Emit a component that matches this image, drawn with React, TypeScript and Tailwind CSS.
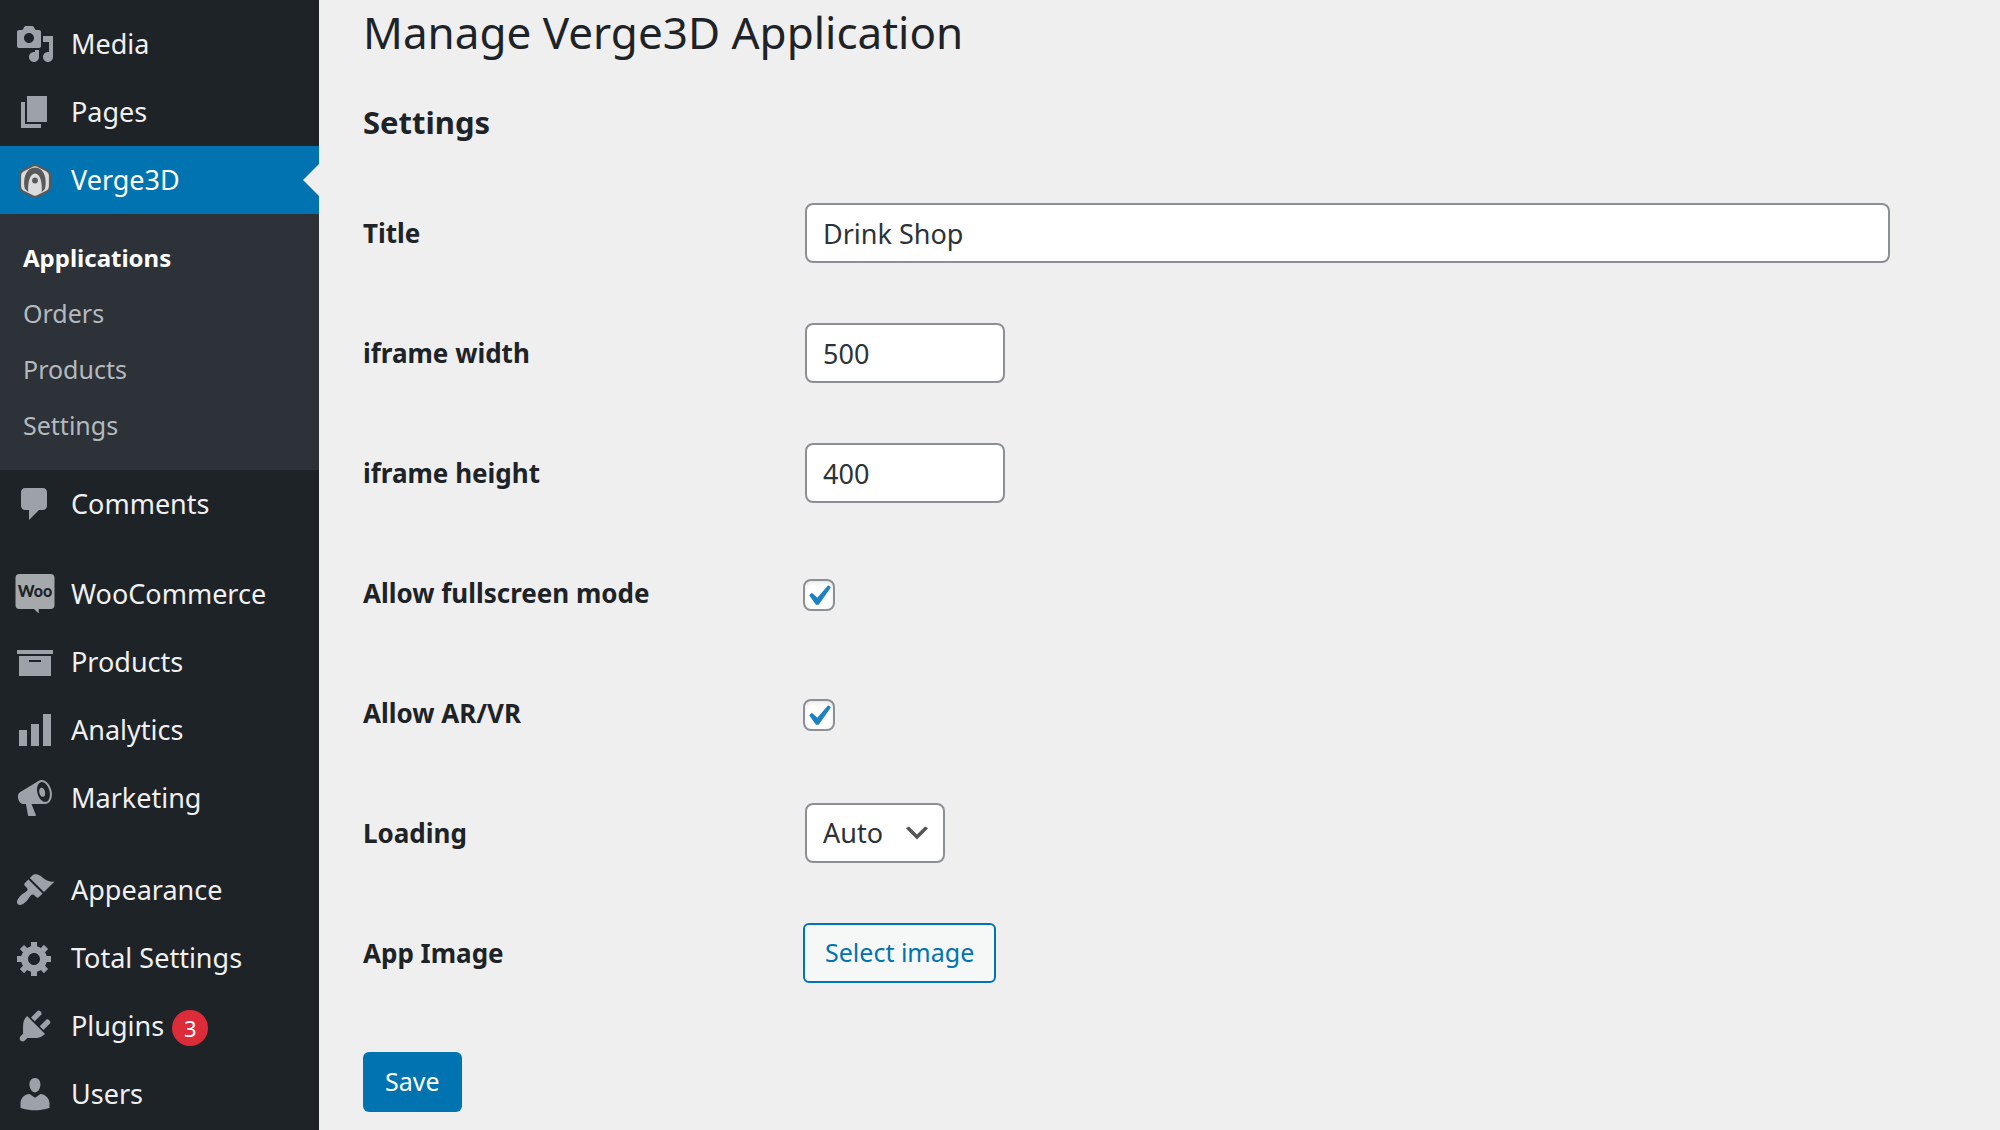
import { useState, type ReactNode } from "react";

const paths = {
  media:
    "M13 11V4c0-.55-.45-1-1-1h-1.67L9 1H5L3.67 3H2c-.55 0-1 .45-1 1v7c0 .55.45 1 1 1h10c.55 0 1-.45 1-1zM7 4.5c1.38 0 2.5 1.12 2.5 2.5S8.38 9.5 7 9.5 4.5 8.38 4.5 7 5.62 4.5 7 4.5zM14 6h5v10.5c0 1.38-1.12 2.5-2.5 2.5S14 17.88 14 16.5s1.12-2.5 2.5-2.5c.17 0 .34.02.5.05V9h-3V6zm-4 8.05V13h2v3.5c0 1.38-1.12 2.5-2.5 2.5S7 17.88 7 16.5 8.12 14 9.5 14c.17 0 .34.02.5.05z",
  pages: "M6 15V2h10v13H6zm-1 1h8v2H3V5h2v11z",
  comments:
    "M5 2h9c1.1 0 2 .9 2 2v7c0 1.1-.9 2-2 2h-2l-5 5v-5H5c-1.1 0-2-.9-2-2V4c0-1.1.9-2 2-2z",
  archive: "M19 4v2H1V4h18zM2 7h16v10H2V7zm11 3V9H7v1h6z",
  chart: "M18 18V2h-4v16h4zm-6 0V7H8v11h4zm-6 0v-8H2v8h4z",
  megaphone:
    "M18.15 5.94c.46 1.62.38 3.22-.02 4.48-.42 1.28-1.26 2.18-2.3 2.48-.16.06-.26.06-.4.06-.06.02-.12.02-.18.02-.06.02-.14.02-.22.02h-6.8l2.22 5.5c.02.14-.06.26-.14.34-.08.1-.24.16-.34.16H6.95c-.1 0-.26-.06-.34-.16-.08-.08-.16-.2-.14-.34l-1-5.5H4.25l-.02-.02c-.5.06-1.08-.18-1.54-.62s-.88-1.08-1.06-1.88c-.24-.8-.2-1.56-.02-2.2.18-.62.58-1.08 1.06-1.3l.02-.02 9-5.4c.1-.06.18-.1.24-.16.06-.04.14-.08.24-.12.16-.08.28-.12.5-.18 1.04-.3 2.24.1 3.22.98s1.84 2.24 2.26 3.86zm-2.58 5.98h-.02c.4-.1.74-.34 1.04-.7.58-.7.86-1.76.86-3.04 0-.64-.1-1.3-.28-1.98-.34-1.36-1.02-2.5-1.78-3.24s-1.68-1.1-2.46-.88c-.82.22-1.4.96-1.7 2-.32 1.04-.28 2.36.06 3.72.38 1.36 1 2.5 1.8 3.24.78.74 1.62 1.1 2.48.88zm-2.54-7.08c.22-.04.42-.02.62.04.38.16.76.48 1.02 1s.42 1.2.42 1.78c0 .3-.04.56-.12.8-.18.48-.44.84-.86.94-.34.1-.8-.06-1.14-.4s-.64-.86-.78-1.5c-.18-.62-.12-1.24.02-1.72s.48-.84.82-.94z",
  appearance:
    "M14.48 11.06L7.41 3.99l1.5-1.5c.5-.56 2.3-.47 3.51.32 1.21.8 1.43 1.28 2.91 2.1 1.18.64 2.45 1.26 4.45.85zm-.71.71L6.7 4.7 4.93 6.47c-.39.39-.39 1.02 0 1.41l1.06 1.06c.39.39.39 1.03 0 1.42-.6.6-1.43 1.11-2.21 1.69-.35.26-.7.53-1.01.84C1.43 14.23.4 16.08 1.4 17.07c.99 1 2.84-.03 4.18-1.36.31-.31.58-.66.85-1.02.57-.78 1.08-1.61 1.69-2.21.39-.39 1.02-.39 1.41 0l1.06 1.06c.39.39 1.02.39 1.41 0z",
  gear: "M18 12h-2.18c-.17.7-.44 1.35-.81 1.93l1.54 1.54-2.1 2.1-1.54-1.54c-.58.36-1.23.63-1.91.79V19H8v-2.18c-.68-.16-1.33-.43-1.91-.79l-1.54 1.54-2.12-2.12 1.54-1.54c-.36-.58-.63-1.23-.79-1.91H1V9.03h2.17c.16-.7.44-1.35.8-1.94L2.43 5.55l2.1-2.1 1.54 1.54c.58-.37 1.24-.64 1.93-.81V2h3v2.18c.68.16 1.33.43 1.91.79l1.54-1.54 2.12 2.12-1.54 1.54c.36.59.64 1.24.8 1.94H18V12zm-8.5 1.5c1.66 0 3-1.34 3-3s-1.34-3-3-3-3 1.34-3 3 1.34 3 3 3z",
  plugins:
    "M13.11 4.36L9.87 7.6 8 5.73l3.24-3.24c.35-.34 1.05-.2 1.56.32.52.51.66 1.21.31 1.55zm-8 1.77l.91-1.12 9.01 9.01-1.19.84c-.71.71-2.63 1.16-3.82 1.16H6.14L4.9 17.26c-.59.59-1.54.59-2.12 0-.59-.58-.59-1.53 0-2.12l1.24-1.24v-3.88c0-1.13.4-3.19 1.09-3.89zm7.26 3.97l3.24-3.24c.34-.35 1.04-.21 1.55.31.52.51.66 1.21.31 1.55l-3.24 3.25z",
  users:
    "M10 9.25c-2.27 0-2.73-3.44-2.73-3.44C7 4.02 7.82 2 9.97 2c2.16 0 2.98 2.02 2.71 3.81 0 0-.41 3.44-2.68 3.44zm0 2.57L12.72 10c2.39 0 4.52 2.33 4.52 4.53v2.49s-3.65 1.13-7.24 1.13c-3.65 0-7.24-1.13-7.24-1.13v-2.49c0-2.25 1.94-4.48 4.47-4.48z",
};

function Icon({ name }: { name: keyof typeof paths }) {
  return (
    <svg viewBox="0 0 20 20" className="size-10 shrink-0 fill-[#9ca2a7]" aria-hidden="true">
      <path d={paths[name]} />
    </svg>
  );
}

function VergeIcon() {
  return (
    <svg viewBox="0 0 40 40" className="size-10 shrink-0" aria-hidden="true">
      <path
        d="M18 5.600Q20 4.600 22 5.600L32 10.600Q35 12.200 35 15.500V26.500Q35 29.800 32 31.400L22 36.400Q20 37.400 18 36.400L8 31.400Q5 29.800 5 26.500V15.500Q5 12.200 8 10.600Z"
        fill="#dcdcdc"
        stroke="#58595b"
        strokeWidth="2.200"
      />
      <path d="M10 29C7.500 19 11 7.500 20 7.500S32.500 19 30 29L26.700 32C27.500 22 25 13.500 20 13.500S12.500 22 13.300 32Z" fill="#58595b" />
      <circle cx="20" cy="20.500" r="2.900" fill="#58595b" />
    </svg>
  );
}

function WooIcon() {
  return (
    <svg viewBox="0 0 40 40" className="size-10 shrink-0" aria-hidden="true">
      <path d="M4.500 0H35.500Q39.500 0 39.500 4V31Q39.500 35 35.500 35H23.700V39.500L19 35H4.500Q.5 35 .5 31V4Q.5 0 4.500 0Z" fill="#a5a9ac" />
      <text x="20" y="23" textAnchor="middle" fontFamily="Lato" fontWeight="900" fontSize="16" fill="#1e2327">
        Woo
      </text>
    </svg>
  );
}

function MenuItem({ icon, label, badge, active }: { icon: ReactNode; label: string; badge?: number; active?: boolean }) {
  return (
    <li className={active ? "relative bg-[#0073b0]" : ""}>
      <a href="#" className={`flex h-[68px] items-center pl-[15px] text-[27px] ${active ? "text-white" : "text-[#f0f0f1]"}`}>
        {icon}
        <span className="pl-4">{label}</span>
        {badge && (
          <span className="ml-2 mt-1 flex size-9 items-center justify-center rounded-full bg-[#dc2c39] text-[22px] text-white">{badge}</span>
        )}
      </a>
      {active && (
        <span className="absolute right-0 top-[18px] border-16 border-l-0 border-transparent border-r-[#efefef]" />
      )}
    </li>
  );
}

const submenu = ["Applications", "Orders", "Products", "Settings"];

function Sidebar() {
  return (
    <nav className="w-[319px] shrink-0 bg-[#1e2327] pt-[10px]">
      <ul>
        <MenuItem icon={<Icon name="media" />} label="Media" />
        <MenuItem icon={<Icon name="pages" />} label="Pages" />
        <MenuItem icon={<VergeIcon />} label="Verge3D" active />
      </ul>
      <ul className="bg-[#2c3238] py-4">
        {submenu.map((item, i) => (
          <li key={item}>
            <a
              href="#"
              className={`flex h-14 items-center px-[23px] ${i === 0 ? "text-[24px] font-bold text-white" : "text-[25px] text-[#b4b9be]"}`}
            >
              {item}
            </a>
          </li>
        ))}
      </ul>
      <ul>
        <MenuItem icon={<Icon name="comments" />} label="Comments" />
      </ul>
      <ul className="pt-[22px]">
        <MenuItem icon={<WooIcon />} label="WooCommerce" />
        <MenuItem icon={<Icon name="archive" />} label="Products" />
        <MenuItem icon={<Icon name="chart" />} label="Analytics" />
        <MenuItem icon={<Icon name="megaphone" />} label="Marketing" />
      </ul>
      <ul className="pt-6">
        <MenuItem icon={<Icon name="appearance" />} label="Appearance" />
        <MenuItem icon={<Icon name="gear" />} label="Total Settings" />
        <MenuItem icon={<Icon name="plugins" />} label="Plugins" badge={3} />
        <MenuItem icon={<Icon name="users" />} label="Users" />
      </ul>
    </nav>
  );
}

function Row({ id, label, children }: { id: string; label: string; children: ReactNode }) {
  return (
    <div className="flex h-[120px] items-center">
      <label htmlFor={id} className="w-[440px] shrink-0 text-[26px] font-bold text-[#1e2327]">
        {label}
      </label>
      {children}
    </div>
  );
}

const field = "mx-[2px] h-[60px] rounded-lg border-2 border-[#8c8f94] bg-white px-4 text-[27px] text-[#2c3338]";

function Checkbox({ id }: { id: string }) {
  const [checked, setChecked] = useState(true);
  return (
    <span className="relative mt-1 size-8">
      <input
        id={id}
        type="checkbox"
        checked={checked}
        onChange={(e) => setChecked(e.target.checked)}
        className="block size-8 appearance-none rounded-lg border-2 border-[#8c8f94] bg-white shadow-[inset_0_2px_4px_rgba(0,0,0,0.1)]"
      />
      {checked && (
        <svg viewBox="0 0 20 20" className="pointer-events-none absolute -left-[6px] -top-1 size-[42px] max-w-none fill-[#1e82c2]" aria-hidden="true">
          <path d="M14.830 4.890l1.340.940-5.810 8.380H9.020L5.780 9.670l1.340-1.250 2.570 2.400z" />
        </svg>
      )}
    </span>
  );
}

export default function App() {
  return (
    <div className="flex min-h-screen bg-[#efefef] font-['Noto_Sans',sans-serif]">
      <Sidebar />
      <main className="min-w-0 flex-1 pl-11 pr-[108px]">
        <h1 className="pt-[2px] text-[44px] leading-[60px] text-[#1e2327]">Manage Verge3D Application</h1>
        <h2 className="pt-[38px] text-[31px] leading-[44px] font-bold text-[#1e2327]">Settings</h2>
        <form className="pt-[29px]" onSubmit={(e) => e.preventDefault()}>
          <Row id="title" label="Title">
            <input id="title" type="text" defaultValue="Drink Shop" className={`${field} min-w-0 flex-1`} />
          </Row>
          <Row id="width" label="iframe width">
            <input id="width" type="text" inputMode="numeric" defaultValue="500" className={`${field} w-[200px]`} />
          </Row>
          <Row id="height" label="iframe height">
            <input id="height" type="text" inputMode="numeric" defaultValue="400" className={`${field} w-[200px]`} />
          </Row>
          <Row id="fullscreen" label="Allow fullscreen mode">
            <Checkbox id="fullscreen" />
          </Row>
          <Row id="arvr" label="Allow AR/VR">
            <Checkbox id="arvr" />
          </Row>
          <Row id="loading" label="Loading">
            <span className="relative">
              <select id="loading" className={`${field} block w-[140px] appearance-none`}>
                <option>Auto</option>
                <option>Lazy</option>
                <option>Eager</option>
              </select>
              <svg viewBox="0 0 20 20" className="pointer-events-none absolute right-[14px] top-[14px] size-8 fill-[#555]" aria-hidden="true">
                <path d="M5 6l5 5 5-5 2 1-7 7-7-7 2-1z" />
              </svg>
            </span>
          </Row>
          <Row id="image" label="App Image">
            <button id="image" type="button" className="h-[60px] rounded-md border-2 border-[#0073b0] bg-[#f6f7f7] px-5 text-[25px] text-[#0073b0]">
              Select image
            </button>
          </Row>
          <button type="submit" className="mt-[39px] h-[60px] rounded-md bg-[#0073b0] px-[22px] text-[25px] text-white">
            Save
          </button>
        </form>
      </main>
    </div>
  );
}
